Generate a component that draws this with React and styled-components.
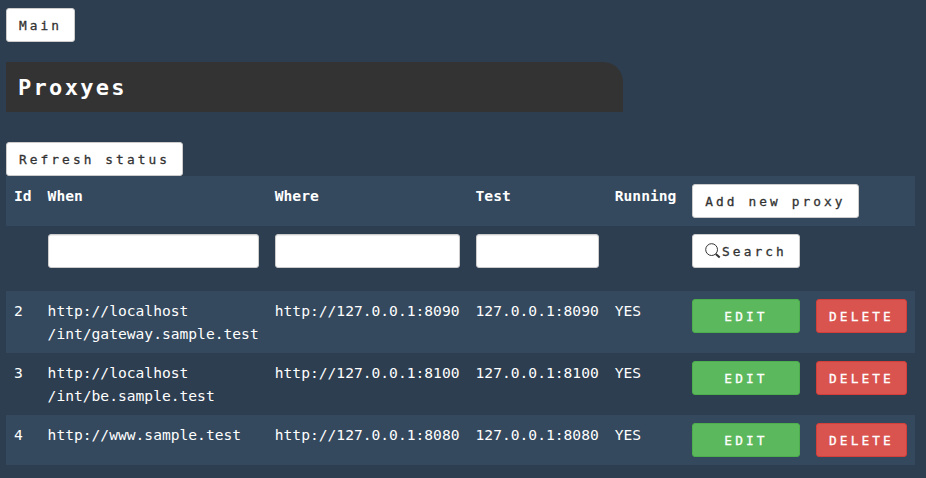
import React from "react";
import styled, { createGlobalStyle } from "styled-components";

const GlobalStyle = createGlobalStyle`
  *, *::before, *::after { box-sizing: border-box; }
  html { background: #2d3e50; }
  body {
    margin: 0;
    background: #2d3e50;
    color: #fff;
    font-family: Consolas, "DejaVu Sans Mono", monospace;
    font-size: 14.61px;
    line-height: 23px;
  }
`;

const Page = styled.main`
  width: 909px;
  margin-left: 6px;
  padding-top: 8px;
`;

const tones = {
  plain: { bg: "#fff", border: "#ccc", text: "#333" },
  success: { bg: "#5cb85c", border: "#4cae4c", text: "#fff" },
  danger: { bg: "#d9534f", border: "#d43f3a", text: "#fff" },
};

const Button = styled.button`
  display: flex;
  align-items: center;
  justify-content: center;
  width: ${(p) => (p.$width ? `${p.$width}px` : "auto")};
  height: 34px;
  margin: 0;
  padding: 1px 12px 0;
  border: 1px solid ${(p) => tones[p.$tone || "plain"].border};
  border-radius: 3px;
  background: ${(p) => tones[p.$tone || "plain"].bg};
  color: ${(p) => tones[p.$tone || "plain"].text};
  font: inherit;
  font-size: 12.8px;
  font-weight: 400;
  line-height: 20px;
  letter-spacing: 3.09px;
  -webkit-text-stroke: 0.3px currentColor;
  white-space: nowrap;
  cursor: pointer;
`;

const Title = styled.h1`
  width: 617px;
  height: 50px;
  margin: 20px 0 30px;
  padding: 1px 12px 0;
  border-top-right-radius: 20px;
  background: #333;
  font-size: 22px;
  font-weight: 700;
  line-height: 50px;
  letter-spacing: 2.3px;
`;

const Table = styled.table`
  width: 909px;
  table-layout: fixed;
  border-collapse: collapse;
  border-spacing: 0;
`;

const Column = styled.col`
  width: ${(p) => p.$width}px;
`;

const Row = styled.tr`
  height: ${(p) => p.$height}px;
  background: ${(p) => (p.$light ? "#34495e" : "transparent")};
`;

const Cell = styled.td`
  padding: 8px;
  text-align: left;
  vertical-align: top;
  white-space: nowrap;
`;

const HeadCell = styled(Cell).attrs({ as: "th" })`
  font-weight: 700;
`;

const Filter = styled.input`
  display: block;
  width: 100%;
  height: 34px;
  padding: 6px 12px;
  border: 1px solid #ccc;
  border-radius: 3px;
  background: #fff;
  box-shadow: inset 0 1px 1px rgba(0, 0, 0, 0.075);
  color: #333;
  font: inherit;
`;

const SearchGlyph = styled.svg`
  width: 16px;
  height: 16px;
  flex: none;
  margin: -1px 1px 0 0;
`;

const columns = [33.6, 227.2, 200.8, 139.2, 77.2, 124, 107];

const proxies = [
  { id: 2, when: ["http://localhost", "/int/gateway.sample.test"], port: 8090 },
  { id: 3, when: ["http://localhost", "/int/be.sample.test"], port: 8100 },
  { id: 4, when: ["http://www.sample.test"], port: 8080 },
];

function SearchIcon() {
  return (
    <SearchGlyph viewBox="0 0 16 16" fill="none" stroke="#333" aria-hidden="true">
      <circle cx="6.6" cy="6.6" r="5.9" strokeWidth="1" />
      <path d="M10.8 10.9 L14.7 14.5" strokeWidth="2" />
    </SearchGlyph>
  );
}

export default function App() {
  return (
    <>
      <GlobalStyle />
      <Page>
        <Button $width={69}>Main</Button>
        <Title>Proxyes</Title>
        <Button $width={177}>Refresh status</Button>
        <Table>
          <colgroup>
            {columns.map((width, i) => (
              <Column key={i} $width={width} />
            ))}
          </colgroup>
          <thead>
            <Row $height={50} $light>
              <HeadCell>Id</HeadCell>
              <HeadCell>When</HeadCell>
              <HeadCell>Where</HeadCell>
              <HeadCell>Test</HeadCell>
              <HeadCell>Running</HeadCell>
              <HeadCell colSpan={2}>
                <Button $width={167}>Add new proxy</Button>
              </HeadCell>
            </Row>
            <Row $height={65}>
              <Cell />
              <Cell><Filter aria-label="When" /></Cell>
              <Cell><Filter aria-label="Where" /></Cell>
              <Cell><Filter aria-label="Test" /></Cell>
              <Cell />
              <Cell>
                <Button $width={108}><SearchIcon />Search</Button>
              </Cell>
              <Cell />
            </Row>
          </thead>
          <tbody>
            {proxies.map(({ id, when, port }, i) => (
              <Row key={id} $height={when.length > 1 ? 62 : 50} $light={i % 2 === 0}>
                <Cell>{id}</Cell>
                <Cell>
                  {when.map((line) => (
                    <div key={line}>{line}</div>
                  ))}
                </Cell>
                <Cell>http://127.0.0.1:{port}</Cell>
                <Cell>127.0.0.1:{port}</Cell>
                <Cell>YES</Cell>
                <Cell><Button $tone="success" $width={108}>EDIT</Button></Cell>
                <Cell><Button $tone="danger" $width={91}>DELETE</Button></Cell>
              </Row>
            ))}
          </tbody>
        </Table>
      </Page>
    </>
  );
}
